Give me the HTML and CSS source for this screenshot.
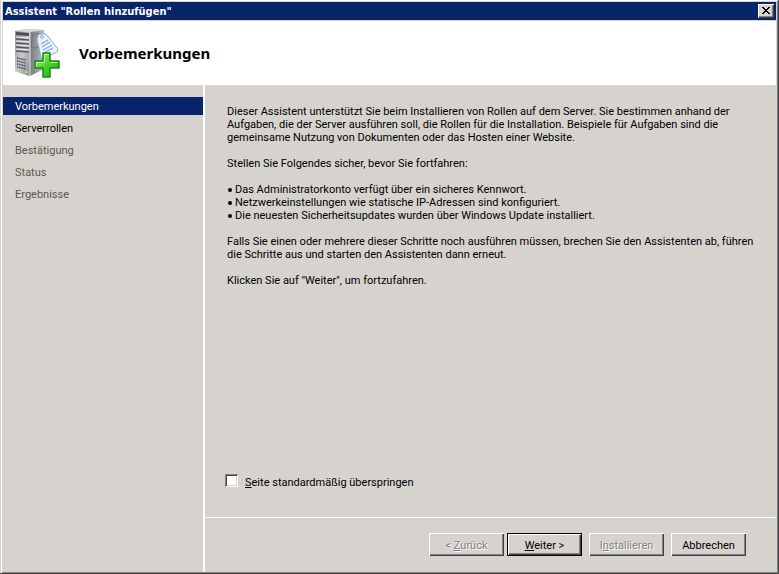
FILE: index.html
```html
<!DOCTYPE html>
<html lang="de">
<head>
<meta charset="utf-8">
<title>Assistent "Rollen hinzufügen"</title>
<link rel="stylesheet" href="styles.css">
</head>
<body>
<div class="window">
  <div class="titlebar">
    <span class="caption">Assistent "Rollen hinzufügen"</span>
    <button class="close" type="button" aria-label="Schließen">
      <svg width="8" height="7" viewBox="0 0 8 7" shape-rendering="crispEdges" aria-hidden="true"><path d="M0 0h2v1h1v1h2v-1h1v-1h2v1h-1v1h-1v1h-1v1h1v1h1v1h1v1h-2v-1h-1v-1h-2v1h-1v1h-2v-1h1v-1h1v-1h1v-1h-1v-1h-1v-1h-1z"/></svg>
    </button>
  </div>
  <header class="header">
    <svg class="logo" width="48" height="52" viewBox="0 0 48 52" aria-hidden="true">
      <defs>
        <linearGradient id="front" x1="0" y1="0" x2="1" y2="1"><stop offset="0" stop-color="#8b8d8f"/><stop offset=".5" stop-color="#c8cacc"/><stop offset="1" stop-color="#85888a"/></linearGradient>
        <linearGradient id="side" x1="0" y1="0" x2="1" y2="0"><stop offset="0" stop-color="#777b80"/><stop offset="1" stop-color="#b7bbc0"/></linearGradient>
        <linearGradient id="plus" x1="0" y1="0" x2="1" y2="1"><stop offset="0" stop-color="#b4f57c"/><stop offset=".5" stop-color="#48d22c"/><stop offset="1" stop-color="#22ab12"/></linearGradient>
      </defs>
      <path d="M0 4L11 2L29 3V42L14 49L0 44Z" fill="#a4a7aa"/>
      <path d="M0 4L15 5V49L0 44Z" fill="url(#front)"/>
      <path d="M15 5L29 3V42L15 49Z" fill="url(#side)"/>
      <path d="M0 4L11 2L29 3L15 5Z" fill="#d9dbdd"/>
      <path d="M1 5L14 6V9L1 8Z" fill="#4d5052"/>
      <path d="M1 12l13 1M1 16l13 1M1 20l13 1M1 24l13 1" stroke="#55585a" stroke-width="1.600"/>
      <path d="M1 10l13 1M1 14l13 1M1 18l13 1M1 22l13 1" stroke="#e6e7e8"/>
      <path d="M2 31l9 2M2 34l9 2M2 37l9 2M2 40l9 2" stroke="#4e5153" stroke-width="1.500" stroke-dasharray="1.500 .700"/>
      <path d="M15 5V49" stroke="#dfe1e3"/>
      <circle cx="11.500" cy="45" r="1.300" fill="#b6ef25"/>
      <path d="M29 9C25 6 18 5 17 11C17 17 15 20 19 21C24 22 24 17 26 17" fill="none" stroke="#70767e" stroke-width="1.200"/>
      <path d="M24 7L31 7L43 22L42 25L28 32L26 30L22 12Z" fill="#e9f2fc" stroke="#8fb0d5"/>
      <circle cx="27" cy="10" r="1.400" fill="#fff" stroke="#7995b5" stroke-width=".8"/>
      <path d="M26 17l7-4M27 20l8-5M28 23l9-5M29 26l9-5" stroke="#86a8d2" stroke-width="1.200"/>
      <path d="M28 26h7v8h9v7h-9v9h-7v-9h-8v-7h8z" fill="url(#plus)" stroke="#188a12" stroke-width="1.500" stroke-linejoin="round"/>
      <path d="M29.500 35.500V27.500h4M21.500 39.500V35.500h8M35 35.500h7.500" fill="none" stroke="#d5ffac" opacity=".75"/>
    </svg>
    <h1 class="heading">Vorbemerkungen</h1>
  </header>
  <div class="body">
    <nav class="steps" aria-label="Schritte">
      <a class="step current" href="#" aria-current="step">Vorbemerkungen</a>
      <a class="step" href="#">Serverrollen</a>
      <a class="step pending">Bestätigung</a>
      <a class="step pending">Status</a>
      <a class="step pending">Ergebnisse</a>
    </nav>
    <main class="page">
      <div class="content">
        <p>Dieser Assistent unterstützt Sie beim Installieren von Rollen auf dem Server. Sie bestimmen anhand der<br>Aufgaben, die der Server ausführen soll, die Rollen für die Installation. Beispiele für Aufgaben sind die<br>gemeinsame Nutzung von Dokumenten oder das Hosten einer Website.</p>
        <p>Stellen Sie Folgendes sicher, bevor Sie fortfahren:</p>
        <ul class="checks">
          <li>Das Administratorkonto verfügt über ein sicheres Kennwort.</li>
          <li>Netzwerkeinstellungen wie statische IP-Adressen sind konfiguriert.</li>
          <li>Die neuesten Sicherheitsupdates wurden über Windows Update installiert.</li>
        </ul>
        <p>Falls Sie einen oder mehrere dieser Schritte noch ausführen müssen, brechen Sie den Assistenten ab, führen<br>die Schritte aus und starten den Assistenten dann erneut.</p>
        <p>Klicken Sie auf "Weiter", um fortzufahren.</p>
      </div>
      <div class="skip">
        <input class="box" type="checkbox" id="skip">
        <label for="skip"><u>S</u>eite standardmäßig überspringen</label>
      </div>
      <footer class="actions">
        <button class="btn" type="button" disabled>&lt; <u>Z</u>urück</button>
        <button class="btn default" type="button"><u>W</u>eiter &gt;</button>
        <button class="btn install" type="button" disabled>I<u>n</u>stallieren</button>
        <button class="btn" type="button">Abbrechen</button>
      </footer>
    </main>
  </div>
</div>
</body>
</html>
```
FILE: styles.css
```css
* { box-sizing: border-box; }

body {
  margin: 0;
  background: #d6d3ce;
  color: #000;
  font: 11px/13px Roboto, "Liberation Sans", sans-serif;
}

.window {
  display: flex;
  flex-direction: column;
  min-height: 100vh;
  padding: 1px 1px 1px 2px;
  border-right: 1px solid #424142;
  border-bottom: 1px solid #424142;
  box-shadow: inset 1px 0 #d6d3ce, inset 2px 1px #fff, inset -1px -1px #848284;
}

.titlebar {
  display: flex;
  align-items: center;
  justify-content: space-between;
  height: 18px;
  margin: 1px;
  padding: 0 2px;
  background: #08246b;
  color: #fff;
}

.caption { font-family: "DejaVu Sans Condensed", sans-serif; font-weight: bold; }

.close {
  display: grid;
  place-items: center;
  width: 16px;
  height: 14px;
  padding: 0 1px 1px 0;
  border: 0;
  background: #d6d3ce;
  box-shadow: inset 1px 1px #fff, inset -1px -1px #424142, inset -2px -2px #848284;
}

.header {
  display: flex;
  align-items: center;
  gap: 16px;
  height: 64px;
  margin: 0 1px;
  padding-left: 12px;
  background: #fff;
}

.heading { margin: 0; font: bold 15px/18px "Noto Sans", "Open Sans", sans-serif; }

.body { display: flex; flex: 1; }

.steps {
  display: flex;
  flex-direction: column;
  gap: 4px;
  width: 203px;
  padding: 12px 0 0 1px;
  border-right: 2px solid #fff;
}

.step {
  padding: 3px 12px 1px;
  line-height: 14px;
  color: #000;
  text-decoration: none;
}

.current { background: #08246b; color: #fff; }
.pending { color: #5a594f; }

.page { display: flex; flex: 1; flex-direction: column; min-width: 0; }

.content { flex: 1; padding: 20px 12px 0 22px; }
.content p { margin: 0 0 13px; }

.checks { margin: 0 0 13px; padding: 0; list-style: none; }
.checks li { display: flex; align-items: center; gap: 3px; }
.checks li::before {
  content: "";
  width: 4px;
  height: 4px;
  margin-left: 1px;
  border-radius: 50%;
  background: #000;
}

.skip { display: flex; align-items: flex-end; gap: 7px; padding: 0 20px 28px; }

.box {
  appearance: none;
  width: 13px;
  height: 13px;
  margin: 0 0 2px;
  background: #fff;
  box-shadow: inset 1px 1px #848284, inset -1px -1px #fff, inset 2px 2px #424142, inset -2px -2px #d6d3ce;
}

.actions {
  display: flex;
  justify-content: flex-end;
  gap: 3px;
  margin-right: 1px;
  padding: 15px 30px 16px 0;
  border-top: 1px solid #fff;
}

.btn {
  width: 75px;
  height: 23px;
  padding: 2px 0 0;
  border: 0;
  background: #d6d3ce;
  color: #000;
  font: inherit;
  box-shadow: inset 1px 1px #fff, inset -1px -1px #424142, inset -2px -2px #848284;
}

.btn:disabled { color: #848284; text-shadow: 1px 1px #fff; }

.default { border: 1px solid #000; }

.install { margin: 0 4px; }
```
